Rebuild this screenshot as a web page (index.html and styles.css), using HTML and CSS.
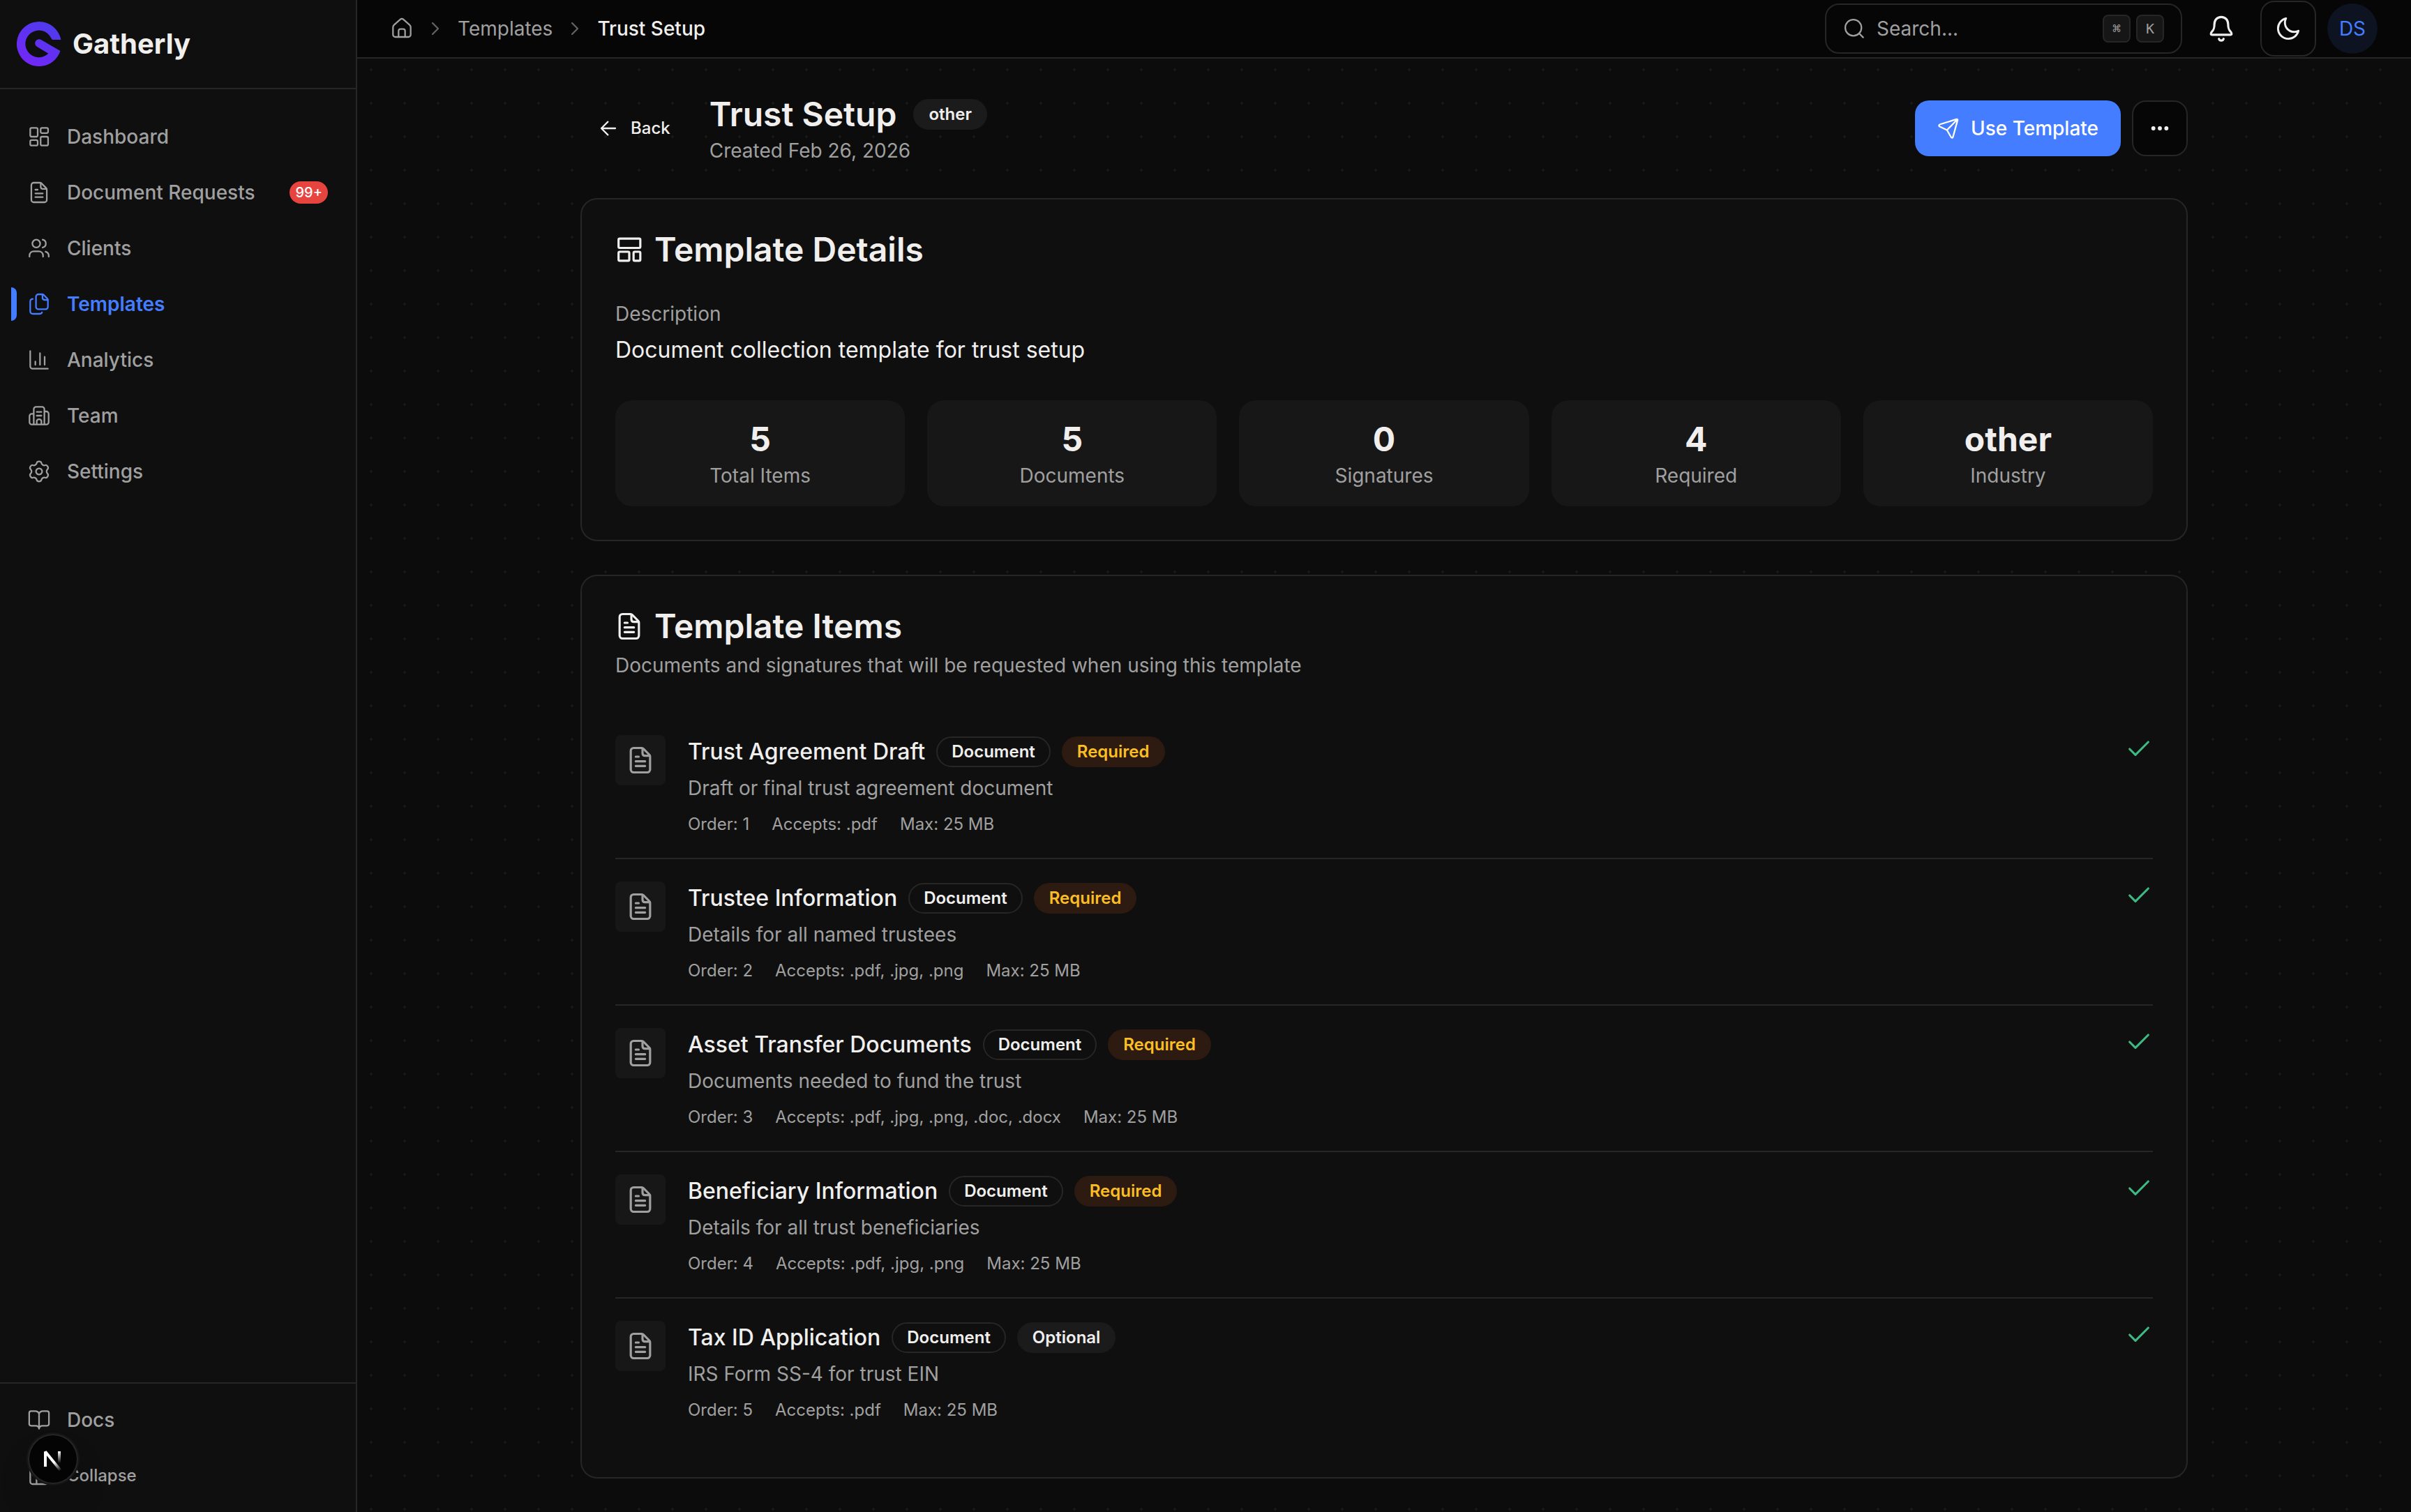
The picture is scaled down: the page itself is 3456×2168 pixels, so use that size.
FILE: index.html
```html
<!DOCTYPE html>
<html lang="en">
  <head>
    <meta charset="UTF-8" />
    <meta name="viewport" content="width=device-width, initial-scale=1.0" />
    <title>Trust Setup - Gatherly</title>
    <link rel="stylesheet" href="styles.css">
  </head>
  <body>
    <!-- Shared icons -->
    <svg class="sprite" aria-hidden="true">
      <symbol id="icon-file" viewBox="0 0 24 24">
        <path d="M3.7 20V4a2.5 2.5 0 0 1 2.5-2.5h6.6a2.5 2.5 0 0 1 1.8.7l5 5a2.5 2.5 0 0 1 .7 1.8v11a2.5 2.5 0 0 1-2.5 2.5H6.2a2.5 2.5 0 0 1-2.5-2.5Z" />
        <path d="M13.8 1.8v4.2c0 1.5.7 2.2 2.2 2.2h4.2M8 9h2.5M8 13h8M8 17h8" />
      </symbol>
      <symbol id="icon-check" viewBox="0 0 24 24">
        <path d="M20 6 9 17l-5-5" />
      </symbol>
      <symbol id="icon-chevron" viewBox="0 0 24 24">
        <path d="m9 18 6-6-6-6" />
      </symbol>
    </svg>

    <div class="layout">
      <!-- Sidebar -->
      <aside class="sidebar">
        <a href="#" class="brand">
          <svg class="brand-logo" viewBox="0 0 64 64" aria-hidden="true">
            <defs>
              <linearGradient id="brandFill" x1="0.2" y1="1" x2="0.8" y2="0">
                <stop offset="0" stop-color="#7526f8" />
                <stop offset="1" stop-color="#4c3cec" />
              </linearGradient>
            </defs>
            <path fill="url(#brandFill)" d="M63.4 26A32 32 0 1 0 62.4 42L34.5 25.8A5.8 5.8 0 0 0 28.7 35.8L45.3 45.8A19.4 19.4 0 1 1 49.3 23.6Q50 26 51.5 26Z" />
          </svg>
          <span class="brand-name">Gatherly</span>
        </a>

        <nav class="nav">
          <a href="#" class="nav-link">
            <svg class="icon" viewBox="0 0 24 24"><rect x="2.5" y="2.5" width="8" height="9.5" rx="1.5" /><rect x="2.5" y="15.7" width="8" height="5.8" rx="1.5" /><rect x="13.7" y="2.5" width="8" height="5.6" rx="1.5" /><rect x="13.7" y="12" width="8" height="9.5" rx="1.5" /></svg>
            <span>Dashboard</span>
          </a>
          <a href="#" class="nav-link">
            <svg class="icon"><use href="#icon-file" /></svg>
            <span>Document Requests</span>
            <span class="nav-count">99+</span>
          </a>
          <a href="#" class="nav-link">
            <svg class="icon" viewBox="0 0 24 24"><circle cx="9" cy="7" r="4.2" /><path d="M1.7 21v-1c0-2.8 2-4.7 4.8-4.7h5c2.8 0 4.8 1.9 4.8 4.7v1M15.8 2.8c2 .4 3.5 2.1 3.5 4.2s-1.5 3.8-3.5 4.2M19 15.6c2.1.6 3.4 2.2 3.4 4.4v1" /></svg>
            <span>Clients</span>
          </a>
          <a href="#" class="nav-link active">
            <svg class="icon" viewBox="0 0 24 24"><path d="M8.7 15V4a2.5 2.5 0 0 1 2.5-2.5h4a2.5 2.5 0 0 1 1.8.7l3.8 3.8a2.5 2.5 0 0 1 .7 1.8V15a2.5 2.5 0 0 1-2.5 2.5h-7.8A2.5 2.5 0 0 1 8.7 15Z" /><path d="M15.7 1.8v3.5c0 1.5.7 2.2 2.2 2.2h3.4M5.3 6.5c-1.8 0-2.8 1-2.8 2.8v10.2c0 1.9 1.1 3 3 3h6.8c1.5 0 2.5-.5 2.9-1.6" /></svg>
            <span>Templates</span>
          </a>
          <a href="#" class="nav-link">
            <svg class="icon" viewBox="0 0 24 24"><path d="M2.5 2.5v16.5a2.5 2.5 0 0 0 2.5 2.5h16.5M8 13.8v3.5M13 4.8v12.5M18 8.8v8.5" /></svg>
            <span>Analytics</span>
          </a>
          <a href="#" class="nav-link">
            <svg class="icon" viewBox="0 0 24 24"><path d="M6.3 21.5V5a2.5 2.5 0 0 1 2.5-2.5h6.4A2.5 2.5 0 0 1 17.7 5v16.5M6.3 10H4.2a2.5 2.5 0 0 0-2.5 2.5V19a2.5 2.5 0 0 0 2.5 2.5h15.6a2.5 2.5 0 0 0 2.5-2.5V10a2.5 2.5 0 0 0-2.5-2.5h-2.1M9.5 8h5M9.5 12h5M9.5 21.5v-3.5a2.5 2.2 0 0 1 5 0v3.5" /></svg>
            <span>Team</span>
          </a>
          <a href="#" class="nav-link">
            <svg class="icon" viewBox="-12 -12 24 24"><path d="M-2.45-9.2Q-2.1-10.7 0-10.7Q2.1-10.7 2.45-9.2Q2.8-7.7 4.04-6.99Q5.27-6.27 6.75-6.72Q8.22-7.17 9.27-5.35Q10.32-3.53 9.2-2.48Q8.07-1.43 8.07 0Q8.07 1.43 9.2 2.48Q10.32 3.53 9.27 5.35Q8.22 7.17 6.75 6.72Q5.27 6.27 4.04 6.99Q2.8 7.7 2.45 9.2Q2.1 10.7 0 10.7Q-2.1 10.7-2.45 9.2Q-2.8 7.7-4.04 6.99Q-5.27 6.27-6.75 6.72Q-8.22 7.17-9.27 5.35Q-10.32 3.53-9.2 2.48Q-8.07 1.43-8.07 0Q-8.07-1.43-9.2-2.48Q-10.32-3.53-9.27-5.35Q-8.22-7.17-6.75-6.72Q-5.27-6.27-4.04-6.99Q-2.8-7.7-2.45-9.2Z" /><circle r="3.3" /></svg>
            <span>Settings</span>
          </a>
        </nav>

        <div class="sidebar-footer">
          <a href="#" class="nav-link">
            <svg class="icon" viewBox="0 0 24 24"><path d="M12 5.3V21.5M12 5.3C11.2 3.3 10 2.5 8 2.5H3.3A2 2 0 0 0 1.4 4.5V16.2a2 2 0 0 0 2 2H8.5c2 0 3 .9 3.5 3M12 5.3C12.8 3.3 14 2.5 16 2.5h4.7a2 2 0 0 1 1.9 2V16.2a2 2 0 0 1-2 2H15.5c-2 0-3 .9-3.5 3" /></svg>
            <span>Docs</span>
          </a>
          <button type="button" class="nav-link collapse-btn">
            <svg class="icon" viewBox="0 0 24 24"><rect x="2.5" y="2.5" width="19" height="18.5" rx="2.5" /><path d="M9.3 2.5V21M5.3 7h1M5.3 11h1" /></svg>
            <span>Collapse</span>
          </button>
        </div>
      </aside>

      <div class="page">
        <!-- Top bar -->
        <header class="topbar">
          <nav class="breadcrumbs" aria-label="Breadcrumb">
            <a href="#" aria-label="Home">
              <svg class="icon" viewBox="0 0 24 24"><path d="M2.5 18.5V10.6c0-1.2.3-1.9 1.2-2.7L10.3 2.2c1.1-1 2.3-1 3.4 0l6.6 5.7c.9.8 1.2 1.5 1.2 2.7v7.9a2.5 2.5 0 0 1-2.5 2.5H5a2.5 2.5 0 0 1-2.5-2.5Z" /><path d="M8.5 21v-6.5a2 2 0 0 1 2-2h3a2 2 0 0 1 2 2V21" /></svg>
            </a>
            <svg class="icon chevron"><use href="#icon-chevron" /></svg>
            <a href="#">Templates</a>
            <svg class="icon chevron"><use href="#icon-chevron" /></svg>
            <span class="current">Trust Setup</span>
          </nav>

          <div class="topbar-actions">
            <label class="search">
              <svg class="icon" viewBox="0 0 24 24"><circle cx="11" cy="11" r="8.7" /><path d="m17.3 17.3 4.2 4.2" /></svg>
              <input type="text" placeholder="Search..." aria-label="Search" />
              <kbd>⌘</kbd>
              <kbd>K</kbd>
            </label>
            <button type="button" class="icon-btn plain" aria-label="Notifications">
              <svg class="icon icon-lg" viewBox="0 0 24 24"><path d="M12 2C8.3 2 6.1 4.8 6.1 8.3c0 3.4-.4 4.5-2 6.2C2.5 16.2 2.9 17.3 4.3 17.3h15.4c1.4 0 1.8-1.1.2-2.8-1.6-1.7-2-2.8-2-6.2C17.9 4.8 15.7 2 12 2ZM10 20.8c.3.9 1 1.5 2 1.5s1.7-.6 2-1.5" /></svg>
            </button>
            <button type="button" class="icon-btn" aria-label="Toggle theme">
              <svg class="icon icon-lg" viewBox="-1 -1 26 26"><path d="M21.5 14.08C20.3 14.72 18.93 15.08 17.48 15.08C12.75 15.08 8.92 11.25 8.92 6.52C8.92 5.07 9.28 3.7 9.92 2.5C5.67 3.5 2.5 7.32 2.5 11.87C2.5 17.19 6.81 21.5 12.13 21.5C16.68 21.5 20.5 18.33 21.5 14.08Z" /></svg>
            </button>
            <button type="button" class="avatar">DS</button>
          </div>
        </header>

        <main class="content">
          <div class="page-header">
            <a href="#" class="back-link">
              <svg class="icon" viewBox="0 0 24 24"><path d="m11.5 19-7-7 7-7M4.5 12H19.5" /></svg>
              Back
            </a>
            <div class="page-heading">
              <div class="title-row">
                <h1>Trust Setup</h1>
                <span class="badge badge-muted">other</span>
              </div>
              <p class="muted">Created Feb 26, 2026</p>
            </div>
            <button type="button" class="btn-primary">
              <svg class="icon" viewBox="0 0 24 24"><path d="M20.7 2.2 3 7.7c-1.5.5-1.7 1.8-.4 2.5l7.8 3.7 4.3 7.5c.7 1.2 1.8 1.1 2.2-.3L21.8 3.3c.2-.8-.3-1.3-1.1-1.1ZM10.4 13.9l10.9-11.3" /></svg>
              Use Template
            </button>
            <button type="button" class="icon-btn" aria-label="More">
              <svg class="icon dots" viewBox="0 0 24 24"><circle cx="5" cy="12" r="2.2" /><circle cx="12" cy="12" r="2.2" /><circle cx="19" cy="12" r="2.2" /></svg>
            </button>
          </div>

          <!-- Template details -->
          <section class="card">
            <h2>
              <svg class="icon icon-lg" viewBox="0 0 24 24"><rect x="2.8" y="2.5" width="18.7" height="8" rx="1" /><rect x="2.8" y="13.8" width="9.2" height="7.7" rx="1" /><rect x="15.7" y="13.8" width="5.8" height="7.7" rx="1" /></svg>
              Template Details
            </h2>
            <div class="description">
              <p class="muted">Description</p>
              <p class="description-text">Document collection template for trust setup</p>
            </div>
            <div class="stats">
              <div class="stat"><strong>5</strong><span>Total Items</span></div>
              <div class="stat"><strong>5</strong><span>Documents</span></div>
              <div class="stat"><strong>0</strong><span>Signatures</span></div>
              <div class="stat"><strong>4</strong><span>Required</span></div>
              <div class="stat"><strong>other</strong><span>Industry</span></div>
            </div>
          </section>

          <!-- Template items -->
          <section class="card">
            <h2>
              <svg class="icon icon-lg"><use href="#icon-file" /></svg>
              Template Items
            </h2>
            <p class="muted card-subtitle">Documents and signatures that will be requested when using this template</p>
            <ul class="items">
              <li class="item">
                <div class="item-icon"><svg class="icon icon-lg"><use href="#icon-file" /></svg></div>
                <div class="item-body">
                  <div class="item-title">
                    <h3>Trust Agreement Draft</h3>
                    <span class="badge">Document</span>
                    <span class="badge badge-required">Required</span>
                  </div>
                  <p class="muted">Draft or final trust agreement document</p>
                  <div class="item-meta"><span>Order: 1</span><span>Accepts: .pdf</span><span>Max: 25 MB</span></div>
                </div>
                <svg class="icon icon-lg item-check"><use href="#icon-check" /></svg>
              </li>
              <li class="item">
                <div class="item-icon"><svg class="icon icon-lg"><use href="#icon-file" /></svg></div>
                <div class="item-body">
                  <div class="item-title">
                    <h3>Trustee Information</h3>
                    <span class="badge">Document</span>
                    <span class="badge badge-required">Required</span>
                  </div>
                  <p class="muted">Details for all named trustees</p>
                  <div class="item-meta"><span>Order: 2</span><span>Accepts: .pdf, .jpg, .png</span><span>Max: 25 MB</span></div>
                </div>
                <svg class="icon icon-lg item-check"><use href="#icon-check" /></svg>
              </li>
              <li class="item">
                <div class="item-icon"><svg class="icon icon-lg"><use href="#icon-file" /></svg></div>
                <div class="item-body">
                  <div class="item-title">
                    <h3>Asset Transfer Documents</h3>
                    <span class="badge">Document</span>
                    <span class="badge badge-required">Required</span>
                  </div>
                  <p class="muted">Documents needed to fund the trust</p>
                  <div class="item-meta"><span>Order: 3</span><span>Accepts: .pdf, .jpg, .png, .doc, .docx</span><span>Max: 25 MB</span></div>
                </div>
                <svg class="icon icon-lg item-check"><use href="#icon-check" /></svg>
              </li>
              <li class="item">
                <div class="item-icon"><svg class="icon icon-lg"><use href="#icon-file" /></svg></div>
                <div class="item-body">
                  <div class="item-title">
                    <h3>Beneficiary Information</h3>
                    <span class="badge">Document</span>
                    <span class="badge badge-required">Required</span>
                  </div>
                  <p class="muted">Details for all trust beneficiaries</p>
                  <div class="item-meta"><span>Order: 4</span><span>Accepts: .pdf, .jpg, .png</span><span>Max: 25 MB</span></div>
                </div>
                <svg class="icon icon-lg item-check"><use href="#icon-check" /></svg>
              </li>
              <li class="item">
                <div class="item-icon"><svg class="icon icon-lg"><use href="#icon-file" /></svg></div>
                <div class="item-body">
                  <div class="item-title">
                    <h3>Tax ID Application</h3>
                    <span class="badge">Document</span>
                    <span class="badge badge-muted">Optional</span>
                  </div>
                  <p class="muted">IRS Form SS-4 for trust EIN</p>
                  <div class="item-meta"><span>Order: 5</span><span>Accepts: .pdf</span><span>Max: 25 MB</span></div>
                </div>
                <svg class="icon icon-lg item-check"><use href="#icon-check" /></svg>
              </li>
            </ul>
          </section>
        </main>
      </div>
    </div>

    <!-- Dev tools indicator -->
    <button type="button" class="dev-badge" aria-label="Open dev tools">
      <svg viewBox="0 0 72 72" fill="none" aria-hidden="true">
        <defs>
          <linearGradient id="devStem" x1="0" y1="25" x2="0" y2="42" gradientUnits="userSpaceOnUse">
            <stop offset="0" stop-color="#fff" />
            <stop offset="1" stop-color="#fff" stop-opacity="0" />
          </linearGradient>
          <linearGradient id="devSlash" x1="38" y1="40" x2="48" y2="52" gradientUnits="userSpaceOnUse">
            <stop offset="0" stop-color="#fff" />
            <stop offset="1" stop-color="#fff" stop-opacity="0" />
          </linearGradient>
        </defs>
        <path d="M25 47V25.5L46.5 52" stroke="url(#devSlash)" stroke-width="4" stroke-linejoin="bevel" />
        <path d="M45 25V42" stroke="url(#devStem)" stroke-width="4" />
      </svg>
    </button>
  </body>
</html>
```

FILE: styles.css
```css
* {
  box-sizing: border-box;
}
body {
  margin: 0;
  font-family: Inter, sans-serif;
  font-size: 28px;
  line-height: 40px;
  color: #f0efee;
  background-color: #0c0c0c;
}
h1,
h2,
h3,
p,
ul {
  margin: 0;
  padding: 0;
}
a {
  color: inherit;
  text-decoration: none;
}
button,
input {
  font: inherit;
  color: inherit;
  border: none;
  background: none;
  padding: 0;
  margin: 0;
}
button {
  cursor: pointer;
}
.sprite {
  display: none;
}
.icon {
  width: 32px;
  height: 32px;
  flex-shrink: 0;
  fill: none;
  stroke: currentColor;
  stroke-width: 1.7;
  stroke-linecap: round;
  stroke-linejoin: round;
}
.icon-lg {
  width: 40px;
  height: 40px;
  stroke-width: 1.9;
}
.muted {
  color: #a0a0a0;
}
.layout {
  display: grid;
  grid-template-columns: 512px minmax(0, 1fr);
  min-height: 100vh;
}

/* Sidebar */
.sidebar {
  position: sticky;
  top: 0;
  height: 100vh;
  display: flex;
  flex-direction: column;
  background-color: #0f0f0f;
  border-right: 2px solid #262626;
}
.brand {
  display: flex;
  align-items: center;
  gap: 16px;
  height: 128px;
  padding: 0 24px;
  border-bottom: 2px solid #262626;
}
.brand-logo {
  width: 64px;
  height: 64px;
}
.brand-name {
  font-size: 40px;
  font-weight: 700;
}
.nav {
  flex: 1;
  display: flex;
  flex-direction: column;
  gap: 8px;
  padding: 32px 16px;
}
.nav-link {
  position: relative;
  display: flex;
  align-items: center;
  gap: 24px;
  height: 72px;
  padding: 0 24px;
  font-weight: 500;
  color: #a0a0a0;
}
.nav-link.active {
  color: #447dff;
  font-weight: 600;
}
.nav-link.active::before {
  content: "";
  position: absolute;
  left: 0;
  top: 12px;
  width: 8px;
  height: 48px;
  border-radius: 0 8px 8px 0;
  background-color: #447dff;
}
.nav-count {
  margin-left: auto;
  padding: 0 8px;
  border-radius: 16px;
  background-color: #e7433f;
  color: #fff;
  font-size: 20px;
  line-height: 32px;
}
.sidebar-footer {
  display: flex;
  flex-direction: column;
  gap: 8px;
  padding: 16px;
  border-top: 2px solid #262626;
}
.collapse-btn {
  font-size: 24px;
}

/* Top bar */
.page {
  background-image: radial-gradient(circle at 4px 4px, #181818 2px, transparent 2px);
  background-size: 48px 48px;
  background-attachment: fixed;
}
.topbar {
  display: flex;
  align-items: center;
  justify-content: space-between;
  height: 84px;
  padding: 0 48px;
  background-color: #060606;
  border-bottom: 2px solid #262626;
}
.breadcrumbs {
  display: flex;
  align-items: center;
  gap: 16px;
  color: #a0a0a0;
}
.breadcrumbs a {
  display: flex;
}
.breadcrumbs .chevron {
  color: #646464;
}
.breadcrumbs .current {
  color: #f0efee;
  font-weight: 500;
}
.topbar-actions {
  display: flex;
  align-items: center;
  gap: 16px;
}
.search {
  display: flex;
  align-items: center;
  gap: 8px;
  width: 512px;
  height: 72px;
  padding: 0 24px;
  border: 2px solid #262626;
  border-radius: 20px;
  color: #a0a0a0;
}
.search input {
  flex: 1;
  min-width: 0;
  padding-left: 8px;
  outline: none;
}
.search input::placeholder {
  color: #a0a0a0;
  opacity: 1;
}
kbd {
  width: 40px;
  height: 40px;
  border: 2px solid #262626;
  border-radius: 8px;
  background-color: #161616;
  font-family: "DejaVu Sans Mono", monospace;
  font-size: 20px;
  line-height: 36px;
  text-align: center;
}
.icon-btn {
  display: flex;
  align-items: center;
  justify-content: center;
  width: 80px;
  height: 80px;
  border: 2px solid #262626;
  border-radius: 20px;
  background-color: #060606;
}
.icon-btn.plain {
  border-color: transparent;
}
.avatar {
  width: 72px;
  height: 72px;
  border-radius: 50%;
  background-color: #0d1321;
  color: #447dff;
}

/* Content */
.content {
  display: flex;
  flex-direction: column;
  gap: 48px;
  max-width: 2400px;
  margin: 0 auto;
  padding: 48px;
}
.page-header {
  display: flex;
  align-items: center;
  gap: 16px;
}
.back-link {
  display: flex;
  align-items: center;
  gap: 16px;
  padding: 0 24px;
  font-size: 24px;
  font-weight: 500;
}
.page-heading {
  flex: 1;
  padding-left: 16px;
}
.title-row {
  display: flex;
  align-items: center;
  gap: 24px;
}
h1 {
  font-size: 48px;
  line-height: 64px;
  font-weight: 600;
}
.btn-primary {
  display: flex;
  align-items: center;
  gap: 16px;
  height: 80px;
  padding: 0 32px;
  border-radius: 20px;
  background-color: #447dff;
  color: #fff;
  font-weight: 500;
}
.dots {
  fill: currentColor;
  stroke: none;
}
.badge {
  height: 44px;
  padding: 0 20px;
  border: 2px solid #262626;
  border-radius: 22px;
  font-size: 24px;
  line-height: 40px;
  font-weight: 600;
}
.badge-muted {
  border-color: #1b1b1b;
  background-color: #1b1b1b;
}
.badge-required {
  border-color: #2d1a11;
  background-color: #2d1a11;
  color: #fbbf24;
}
.card {
  padding: 48px;
  border: 2px solid #262626;
  border-radius: 24px;
  background-color: #0f0f0f;
}
h2 {
  display: flex;
  align-items: center;
  gap: 16px;
  font-size: 48px;
  line-height: 48px;
  font-weight: 600;
}
.description {
  margin: 48px 0;
}
.description-text {
  margin-top: 8px;
  font-size: 32px;
  line-height: 48px;
}
.stats {
  display: grid;
  grid-template-columns: repeat(5, 1fr);
  gap: 32px;
}
.stat {
  display: flex;
  flex-direction: column;
  padding: 24px;
  border-radius: 24px;
  background-color: #171717;
  text-align: center;
}
.stat strong {
  font-size: 48px;
  line-height: 64px;
}
.stat span {
  color: #a0a0a0;
}
.card-subtitle {
  margin: 12px 0 48px;
}
.items {
  list-style: none;
}
.item {
  display: flex;
  align-items: flex-start;
  gap: 32px;
  padding: 32px 0;
  border-bottom: 2px solid #262626;
}
.item:last-child {
  border-bottom: none;
}
.item-icon {
  display: flex;
  padding: 16px;
  border-radius: 8px;
  background-color: #171717;
  color: #a0a0a0;
}
.item-body {
  flex: 1;
}
.item-title {
  display: flex;
  align-items: center;
  gap: 16px;
  margin-bottom: 8px;
}
h3 {
  font-size: 32px;
  line-height: 48px;
  font-weight: 500;
}
.item-meta {
  display: flex;
  gap: 32px;
  margin-top: 16px;
  font-size: 24px;
  line-height: 32px;
  color: #a0a0a0;
}
.item-check {
  color: #3fb984;
}

/* Floating over the sidebar footer */
.dev-badge {
  position: fixed;
  left: 40px;
  bottom: 40px;
  width: 72px;
  height: 72px;
  border-radius: 50%;
  background-color: #040404;
  box-shadow: 0 0 0 2px #171717, inset 0 0 0 2px #272727, 0 32px 64px -16px rgba(0, 0, 0, 0.24);
}
.dev-badge svg {
  display: block;
}
```
